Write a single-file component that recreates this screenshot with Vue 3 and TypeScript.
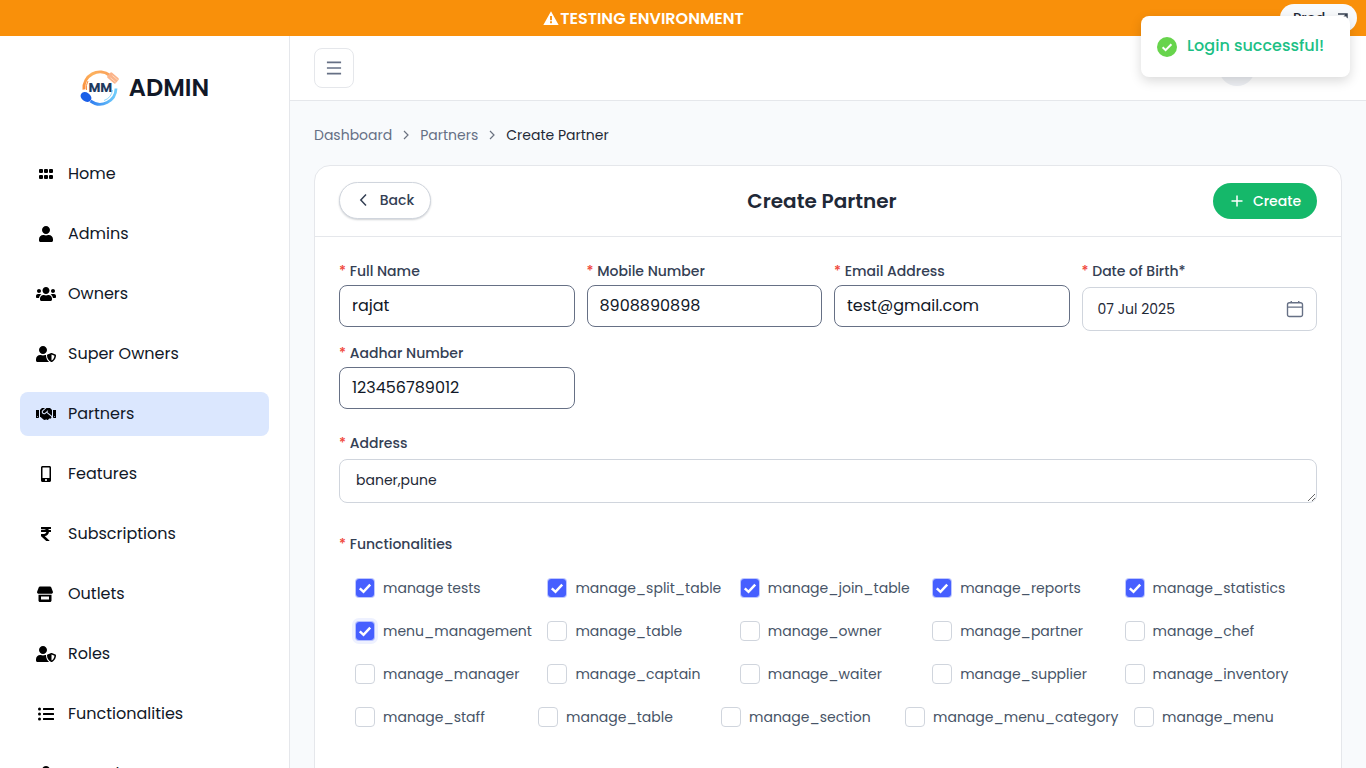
<template>
  <div class="app">
    <div class="env-bar">
      <svg class="env-icon" viewBox="0 0 24 24"><path d="M12 2 L23.500 22.500 H.5 Z M10.600 9v6.500h2.800V9z M10.600 17v2.800h2.800V17z" fill="#fff" fill-rule="evenodd" /></svg>
      <span>TESTING ENVIRONMENT</span>
      <div class="prod-pill">
        <span>Prod</span>
        <svg viewBox="0 0 12 12" width="12" height="12"><path d="M1 2h9v9M10 2 3 9" fill="none" stroke="#374151" stroke-width="1.500" /></svg>
      </div>
    </div>

    <div class="layout">
      <aside class="sidebar">
        <div class="logo">
          <div class="logo-mark">
            <svg viewBox="0 0 40 40" width="40" height="40">
              <defs>
                <linearGradient id="ringTop" x1="0" y1="1" x2="1" y2="0">
                  <stop offset="0" stop-color="#fb8f3c" />
                  <stop offset="0.6" stop-color="#fdb25e" />
                  <stop offset="1" stop-color="#f9a05a" />
                </linearGradient>
                <linearGradient id="ringBottom" x1="0" y1="0" x2="1" y2="0">
                  <stop offset="0" stop-color="#2f7df0" />
                  <stop offset="1" stop-color="#6fcdfb" />
                </linearGradient>
              </defs>
              <path d="M4 21.500A16 16 0 0 1 30 7.500" fill="none" stroke="url(#ringTop)" stroke-width="3" />
              <path d="M6.500 22A13.500 13.500 0 0 1 8 13" fill="none" stroke="#f97316" stroke-width="0.8" />
              <g transform="rotate(40 33 10)">
                <rect x="27.500" y="6.500" width="11" height="7" rx="1.500" fill="#fbb48a" />
                <path d="M31 8.500h7M31 11.500h7" stroke="#fde3d0" stroke-width="0.7" />
              </g>
              <path d="M10.500 33A16 16 0 0 0 36 20.500" fill="none" stroke="url(#ringBottom)" stroke-width="2.800" />
              <path d="M32.500 22A13 13 0 0 1 24 32.500" fill="none" stroke="#7dd3fc" stroke-width="0.9" />
              <ellipse cx="6" cy="29" rx="5.800" ry="4.400" transform="rotate(35 6 29)" fill="#1a5fe8" />
            </svg>
            <span class="logo-mm">MM</span>
          </div>
          <span class="logo-text">ADMIN</span>
        </div>

        <nav class="nav">
          <a v-for="item in navItems" :key="item.label" :class="['nav-item', { active: item.label === 'Partners' }]">
            <svg class="nav-icon" :viewBox="item.viewBox"><path :d="item.d" fill="#000" fill-rule="evenodd" /></svg>
            <span>{{ item.label }}</span>
          </a>
        </nav>
      </aside>

      <main class="main">
        <header class="header">
          <button class="menu-btn">
            <svg viewBox="0 0 24 24" width="20" height="20"><path d="M3.500 5.300h17M3.500 12h17M3.500 18.700h17" stroke="#667085" stroke-width="2" fill="none" /></svg>
          </button>
          <div class="avatar"></div>
        </header>

        <div class="content">
          <div class="crumbs">
            <span>Dashboard</span>
            <svg viewBox="0 0 12 12" width="12" height="12"><path d="M4 2l4 4-4 4" fill="none" stroke="#6b7280" stroke-width="1.200" /></svg>
            <span>Partners</span>
            <svg viewBox="0 0 12 12" width="12" height="12"><path d="M4 2l4 4-4 4" fill="none" stroke="#6b7280" stroke-width="1.200" /></svg>
            <span class="crumb-current">Create Partner</span>
          </div>

          <section class="card">
            <div class="card-head">
              <button class="back-btn">
                <svg viewBox="0 0 16 16" width="16" height="16"><path d="M10 2.500 4.800 8l5.200 5.500" fill="none" stroke="#344054" stroke-width="1.500" /></svg>
                <span>Back</span>
              </button>
              <h1>Create Partner</h1>
              <button class="create-btn">
                <svg viewBox="0 0 16 16" width="16" height="16"><path d="M8 2.500v11M2.500 8h11" fill="none" stroke="#fff" stroke-width="1.500" /></svg>
                <span>Create</span>
              </button>
            </div>

            <div class="card-body">
              <div class="field-grid">
                <div v-for="field in fields" :key="field.label" class="field">
                  <label><i>*</i> {{ field.label }}</label>
                  <input class="text-input" type="text" :value="field.value" />
                </div>
                <div class="field">
                  <label><i>*</i> Date of Birth*</label>
                  <div class="date-input">
                    <span>07 Jul 2025</span>
                    <svg viewBox="0 0 16 16" width="20" height="20"><path d="M2 4.500a1.500 1.500 0 0 1 1.500-1.500h9A1.500 1.500 0 0 1 14 4.500v8a1.500 1.500 0 0 1-1.500 1.500h-9A1.500 1.500 0 0 1 2 12.500zM2 6.500h12M5 1.500V3M11 1.500V3" fill="none" stroke="#667085" stroke-width="1.100" /></svg>
                  </div>
                </div>
                <div class="field">
                  <label><i>*</i> Aadhar Number</label>
                  <input class="text-input" type="text" value="123456789012" />
                </div>
              </div>

              <div class="field address">
                <label><i>*</i> Address</label>
                <textarea class="area-input" rows="1">baner,pune</textarea>
              </div>

              <div class="func-label"><i>*</i> Functionalities</div>
              <div class="func-rows">
                <div v-for="(row, r) in funcRows" :key="r" :class="['func-row', { 'func-row-last': r === 3 }]">
                  <label v-for="f in row" :key="f.name" class="check">
                    <span :class="['box', { on: f.on, focus: f.name === 'menu_management' }]">
                      <svg v-if="f.on" viewBox="0 0 16 16" width="16" height="16"><path d="M2.800 8.400 6.500 11.800 13.200 4.600" fill="none" stroke="#fff" stroke-width="2.500" /></svg>
                    </span>
                    <span>{{ f.name }}</span>
                  </label>
                </div>
              </div>
            </div>
          </section>
        </div>
      </main>
    </div>

    <div class="toast">
      <svg viewBox="0 0 20 20" width="20" height="20"><circle cx="10" cy="10" r="10" fill="#67d44c" /><path d="M5.600 10.300 8.600 13.200 14.400 7.200" fill="none" stroke="#fff" stroke-width="2" /></svg>
      <span>Login successful!</span>
    </div>
  </div>
</template>

<script setup lang="ts">
interface NavItem {
  label: string;
  viewBox: string;
  d: string;
}

interface Func {
  name: string;
  on: boolean;
}

// Rounded square for the home grid icon
const cell = (x: number, y: number): string =>
  `M${x + 32} ${y}h64a32 32 0 0 1 32 32v64a32 32 0 0 1-32 32h-64a32 32 0 0 1-32-32v-64a32 32 0 0 1 32-32z`;

const gripIcon = [0, 160, 320].flatMap((x) => [cell(x, 96), cell(x, 288)]).join('');

const userIcon =
  'M224 256c70.700 0 128-57.300 128-128S294.700 0 224 0 96 57.300 96 128s57.300 128 128 128zm89.600 32h-16.700c-22.200 10.200-46.900 16-72.900 16s-50.600-5.800-72.900-16h-16.700C60.200 288 0 348.200 0 422.400V464c0 26.500 21.500 48 48 48h352c26.500 0 48-21.500 48-48v-41.600c0-74.200-60.200-134.400-134.400-134.400z';

const usersIcon =
  'M96 224c35.300 0 64-28.700 64-64s-28.700-64-64-64-64 28.700-64 64 28.700 64 64 64zm448 0c35.300 0 64-28.700 64-64s-28.700-64-64-64-64 28.700-64 64 28.700 64 64 64zm32 32h-64c-17.600 0-33.500 7.100-45.100 18.600 40.300 22.100 68.900 62 75.100 109.400h66c17.700 0 32-14.300 32-32v-32c0-35.300-28.700-64-64-64zm-256 0c61.900 0 112-50.100 112-112S381.900 32 320 32 208 82.100 208 144s50.100 112 112 112zm76.800 32h-8.300c-20.800 10-43.900 16-68.500 16s-47.600-6-68.500-16h-8.300C179.600 288 128 339.600 128 403.200V432c0 26.500 21.500 48 48 48h288c26.500 0 48-21.500 48-48v-28.800c0-63.600-51.600-115.200-115.200-115.200zm-223.700-13.400C161.500 263.100 145.600 256 128 256H64c-35.300 0-64 28.700-64 64v32c0 17.700 14.300 32 32 32h65.900c6.300-47.400 34.900-87.300 75.200-109.400z';

const userShieldIcon =
  'M622.300 271.100l-115.200-45c-4.100-1.600-12.600-3.700-22.200 0l-115.200 45c-10.700 4.200-17.700 14-17.700 24.900 0 111.600 68.700 188.800 132.900 213.900 9.600 3.700 18 1.600 22.200 0C558.400 489.900 640 420.500 640 296c0-10.900-7-20.700-17.700-24.900zM496 462.400V273.500l95.500 37.300c-5.600 87.100-60.900 135.400-95.500 151.600zM224 256c70.700 0 128-57.300 128-128S294.700 0 224 0 96 57.300 96 128s57.300 128 128 128zm96 40c0-2.500.8-4.800 1.100-7.200-2.500-.1-4.900-.8-7.500-.8h-16.700c-22.200 10.200-46.900 16-72.900 16s-50.600-5.800-72.900-16h-16.700C60.200 288 0 348.200 0 422.400V464c0 26.500 21.500 48 48 48h352c6.800 0 13.300-1.500 19.200-4-54-42.900-99.200-116.700-99.200-212z';

const handshakeIcon =
  'M434.700 64h-85.900c-8 0-15.700 3-21.600 8.400l-98.300 90c-.1.1-.2.3-.3.4-16.600 15.600-16.300 40.500-2.100 56 12.700 13.900 39.400 17.600 56.100 2.700.1-.1.3-.1.4-.2l79.900-73.200c6.500-5.900 16.700-5.500 22.600 1 6 6.500 5.500 16.600-1 22.600l-26.100 23.900L504 313.800c2.900 2.400 5.500 5 7.900 7.700V128l-54.600-54.600c-5.900-6-14.100-9.400-22.600-9.400zM544 128.200v223.900c0 17.700 14.300 32 32 32h64V128.200h-96zm48 223.900c-8.800 0-16-7.200-16-16s7.200-16 16-16 16 7.200 16 16-7.200 16-16 16zM0 384h64c17.700 0 32-14.300 32-32V128.200H0V384zm48-63.900c8.800 0 16 7.200 16 16s-7.200 16-16 16-16-7.200-16-16c0-8.900 7.200-16 16-16zm435.900 18.600L334.600 217.500l-30 27.500c-29.700 27.100-75.200 24.500-101.700-4.400-26.900-29.400-24.800-74.900 4.400-101.700L289.100 64h-83.800c-8.500 0-16.600 3.400-22.600 9.400L128 128v223.900h18.300l90.500 81.900c27.400 22.300 67.700 18.100 90-9.300l.2-.2 17.900 15.500c15.900 13 39.400 10.500 52.300-5.400l31.400-38.600 5.400 4.400c13.700 11.100 33.900 9.100 45-4.700l9.500-11.700c11.200-13.800 9.100-33.900-4.600-45.100z';

const mobileIcon =
  'M272 0H48C21.500 0 0 21.500 0 48v416c0 26.500 21.500 48 48 48h224c26.500 0 48-21.500 48-48V48c0-26.500-21.500-48-48-48zM160 480c-17.700 0-32-14.300-32-32s14.300-32 32-32 32 14.300 32 32-14.300 32-32 32zm112-108c0 6.600-5.400 12-12 12H60c-6.600 0-12-5.400-12-12V60c0-6.600 5.400-12 12-12h200c6.600 0 12 5.400 12 12v312z';

const rupeeIcon =
  'M308 96c6.600 0 12-5.400 12-12V44c0-6.600-5.400-12-12-12H12C5.400 32 0 37.400 0 44v44.700c0 6.600 5.400 12 12 12h85.300c27.300 0 48.300 10 61 27.300H12c-6.600 0-12 5.400-12 12v40c0 6.600 5.400 12 12 12h158.800c-6.200 36.100-33 58.600-74.800 60H12c-6.600 0-12 5.400-12 12v53c0 3.300 1.400 6.500 3.900 8.800l165.100 152.400c2.200 2.100 5.100 3.200 8.100 3.200h82.600c10.900 0 16.200-13.400 8.100-20.800L116.900 319.900c76.500-2.300 131.100-53.400 138.300-127.900H308c6.600 0 12-5.400 12-12v-40c0-6.600-5.400-12-12-12h-58.700c-3.500-11.500-8.300-22.200-14.300-32H308z';

const storeIcon =
  'M3 .5h10c.5 0 1 .3 1.200.7L16 6c0 1.200-.8 1.800-1.800 1.800H1.800C.8 7.800 0 7.200 0 6l1.800-4.800C2 .8 2.500.5 3 .5zM1.500 8.800h13v5.700c0 .8-.7 1.500-1.500 1.500H3c-.8 0-1.500-.7-1.500-1.500zM4 10.500v3h8v-3z';

const listIcon =
  'M48 48a48 48 0 1 0 48 48 48 48 0 0 0-48-48zm0 160a48 48 0 1 0 48 48 48 48 0 0 0-48-48zm0 160a48 48 0 1 0 48 48 48 48 0 0 0-48-48zm448 16H176a16 16 0 0 0-16 16v32a16 16 0 0 0 16 16h320a16 16 0 0 0 16-16v-32a16 16 0 0 0-16-16zm0-320H176a16 16 0 0 0-16 16v32a16 16 0 0 0 16 16h320a16 16 0 0 0 16-16V80a16 16 0 0 0-16-16zm0 160H176a16 16 0 0 0-16 16v32a16 16 0 0 0 16 16h320a16 16 0 0 0 16-16v-32a16 16 0 0 0-16-16z';

const navItems: NavItem[] = [
  { label: 'Home', viewBox: '0 0 448 512', d: gripIcon },
  { label: 'Admins', viewBox: '0 0 448 512', d: userIcon },
  { label: 'Owners', viewBox: '0 0 640 512', d: usersIcon },
  { label: 'Super Owners', viewBox: '0 0 640 512', d: userShieldIcon },
  { label: 'Partners', viewBox: '0 0 640 512', d: handshakeIcon },
  { label: 'Features', viewBox: '0 0 320 512', d: mobileIcon },
  { label: 'Subscriptions', viewBox: '0 0 320 512', d: rupeeIcon },
  { label: 'Outlets', viewBox: '-1 0 20 16', d: storeIcon },
  { label: 'Roles', viewBox: '0 0 640 512', d: userShieldIcon },
  { label: 'Functionalities', viewBox: '0 0 512 512', d: listIcon },
  { label: 'Samples', viewBox: '0 0 448 512', d: userIcon }
];

const fields = [
  { label: 'Full Name', value: 'rajat' },
  { label: 'Mobile Number', value: '8908890898' },
  { label: 'Email Address', value: 'test@gmail.com' }
];

const toRow = (names: string[], on = false): Func[] => names.map((name) => ({ name, on }));

const funcRows: Func[][] = [
  toRow(['manage tests', 'manage_split_table', 'manage_join_table', 'manage_reports', 'manage_statistics'], true),
  [
    { name: 'menu_management', on: true },
    ...toRow(['manage_table', 'manage_owner', 'manage_partner', 'manage_chef'])
  ],
  toRow(['manage_manager', 'manage_captain', 'manage_waiter', 'manage_supplier', 'manage_inventory']),
  toRow(['manage_staff', 'manage_table', 'manage_section', 'manage_menu_category', 'manage_menu'])
];
</script>

<style>
html,
body {
  margin: 0;
  height: 100%;
  overflow: hidden;
}
</style>

<style scoped>
.app {
  position: relative;
  height: 768px;
  overflow: hidden;
  display: flex;
  flex-direction: column;
  font-family: Poppins, Inter, "Liberation Sans", sans-serif;
  color: #111827;
}

.env-bar {
  position: relative;
  flex: 0 0 36px;
  box-sizing: border-box;
  padding-right: 79px;
  background: #f9900a;
  color: #fff;
  display: flex;
  align-items: center;
  justify-content: center;
  gap: 1px;
  font-size: 16px;
  font-weight: 600;
}

.env-icon {
  width: 16px;
  height: 16px;
}

.prod-pill {
  position: absolute;
  top: 4px;
  left: 1280px;
  box-sizing: border-box;
  width: 77px;
  height: 28px;
  padding-left: 13px;
  border-radius: 14px;
  background: #f8fafc;
  display: flex;
  align-items: center;
  gap: 12px;
  color: #1f2937;
  font-size: 14px;
  font-weight: 500;
}

.layout {
  flex: 1;
  display: flex;
  min-height: 0;
}

.sidebar {
  flex: 0 0 289px;
  background: #fff;
  border-right: 1px solid #e5e7eb;
  overflow: hidden;
}

.logo {
  display: flex;
  align-items: center;
  justify-content: center;
  gap: 9px;
  height: 103px;
}

.logo-mark {
  position: relative;
  width: 40px;
  height: 40px;
}

.logo-mm {
  position: absolute;
  left: 1px;
  right: 0;
  top: 12px;
  text-align: center;
  font-size: 13px;
  line-height: 16px;
  font-weight: 700;
  color: #1e3a5f;
}

.logo-text {
  font-size: 24px;
  font-weight: 600;
  color: #111827;
}

.nav {
  display: flex;
  flex-direction: column;
  gap: 16px;
  padding: 13px 20px 0;
}

.nav-item {
  flex: 0 0 44px;
  display: flex;
  align-items: center;
  gap: 12px;
  padding-left: 16px;
  border-radius: 8px;
  font-size: 16px;
  color: #111827;
}

.nav-item span {
  margin-top: -2px;
}

.nav-item.active {
  background: #dbe7fe;
}

.nav-icon {
  flex: 0 0 20px;
  width: 20px;
  height: 16px;
}

.main {
  flex: 1;
  min-width: 0;
  display: flex;
  flex-direction: column;
  background: #f8fafc;
}

.header {
  flex: 0 0 64px;
  background: #fff;
  border-bottom: 1px solid #e5e7eb;
  display: flex;
  align-items: center;
  justify-content: space-between;
  padding: 0 111px 0 24px;
}

.menu-btn {
  width: 40px;
  height: 40px;
  padding: 0;
  background: #fff;
  border: 1px solid #e5e7eb;
  border-radius: 8px;
  display: flex;
  align-items: center;
  justify-content: center;
}

.avatar {
  width: 36px;
  height: 36px;
  border-radius: 50%;
  background: #eef0f4;
}

.content {
  flex: 1;
  min-height: 0;
  padding: 24px 24px 0;
}

.crumbs {
  display: flex;
  align-items: center;
  gap: 8px;
  height: 20px;
  font-size: 14px;
  color: #667085;
}

.crumb-current {
  color: #1f2937;
}

.card {
  margin-top: 20px;
  background: #fff;
  border: 1px solid #e5e7eb;
  border-radius: 16px;
  height: 640px;
}

.card-head {
  height: 70px;
  border-bottom: 1px solid #e5e7eb;
  display: flex;
  align-items: center;
  justify-content: space-between;
  padding: 0 24px;
}

.card-head h1 {
  margin: 0;
  font-size: 20px;
  font-weight: 600;
  color: #1f2937;
}

.back-btn {
  width: 92px;
  height: 37px;
  margin-bottom: 2px;
  font: inherit;
  font-size: 14px;
  font-weight: 500;
  color: #344054;
  background: #fff;
  border: 1px solid #d0d5dd;
  border-radius: 19px;
  box-shadow: 0 1px 2px rgba(16, 24, 40, 0.2);
  display: flex;
  align-items: center;
  justify-content: center;
  gap: 8px;
  padding: 0;
}

.create-btn {
  width: 104px;
  height: 36px;
  font: inherit;
  font-size: 14px;
  font-weight: 500;
  color: #fff;
  background: #15b86a;
  border: 0;
  border-radius: 18px;
  display: flex;
  align-items: center;
  justify-content: center;
  gap: 8px;
  padding: 0;
}

.card-body {
  padding: 24px;
}

.field-grid {
  display: grid;
  grid-template-columns: repeat(4, 1fr);
  column-gap: 12px;
  row-gap: 12px;
}

.field label,
.func-label {
  display: block;
  height: 20px;
  margin-bottom: 4px;
  font-size: 14px;
  line-height: 20px;
  font-weight: 500;
  color: #344054;
}

.field i,
.func-label i {
  color: #f04438;
  font-style: normal;
}

.text-input {
  box-sizing: border-box;
  display: block;
  width: 100%;
  height: 42px;
  padding: 0 12px 2px;
  border: 1px solid #667085;
  border-radius: 8px;
  font: inherit;
  font-size: 16px;
  color: #111827;
  background: #fff;
  outline: none;
}

.date-input {
  box-sizing: border-box;
  height: 44px;
  margin-top: 6px;
  padding: 0 11px 0 15px;
  border: 1px solid #d0d5dd;
  border-radius: 8px;
  display: flex;
  align-items: center;
  justify-content: space-between;
  font-size: 14px;
  color: #1f2937;
}

.address {
  margin-top: 24px;
}

.area-input {
  box-sizing: border-box;
  display: block;
  width: 100%;
  height: 44px;
  margin-top: 6px;
  padding: 10px 16px;
  border: 1px solid #d0d5dd;
  border-radius: 8px;
  font: inherit;
  font-size: 14px;
  line-height: 20px;
  color: #1f2937;
  outline: none;
}

.func-label {
  margin: 31px 0 0;
}

.func-rows {
  margin-top: 23px;
  padding-left: 16px;
  display: flex;
  flex-direction: column;
  gap: 21px;
}

.func-row {
  display: grid;
  grid-template-columns: repeat(5, 192.4px);
}

.func-row-last {
  grid-template-columns: 183px 183px 184px 229px auto;
}

.check {
  display: flex;
  align-items: center;
  gap: 8px;
  height: 22px;
  font-size: 14px;
  color: #475467;
  white-space: nowrap;
}

.box {
  box-sizing: border-box;
  flex: 0 0 20px;
  width: 20px;
  height: 20px;
  border: 1px solid #d0d5dd;
  border-radius: 4px;
  background: #fff;
  display: flex;
  align-items: center;
  justify-content: center;
}

.box.on {
  background: #465fff padding-box;
  border-color: rgba(70, 95, 255, 0.35);
}

.box.focus {
  box-shadow: 0 0 0 3px #eef1ff;
}

.toast {
  position: absolute;
  left: 1141px;
  top: 16px;
  width: 209px;
  height: 61px;
  box-sizing: border-box;
  padding-left: 16px;
  background: #fff;
  border-radius: 8px;
  box-shadow: 0 4px 12px rgba(0, 0, 0, 0.15);
  display: flex;
  align-items: center;
  gap: 10px;
  font-size: 16px;
  font-weight: 500;
  color: #1cbf85;
}

.toast span {
  margin-top: -2px;
}
</style>
